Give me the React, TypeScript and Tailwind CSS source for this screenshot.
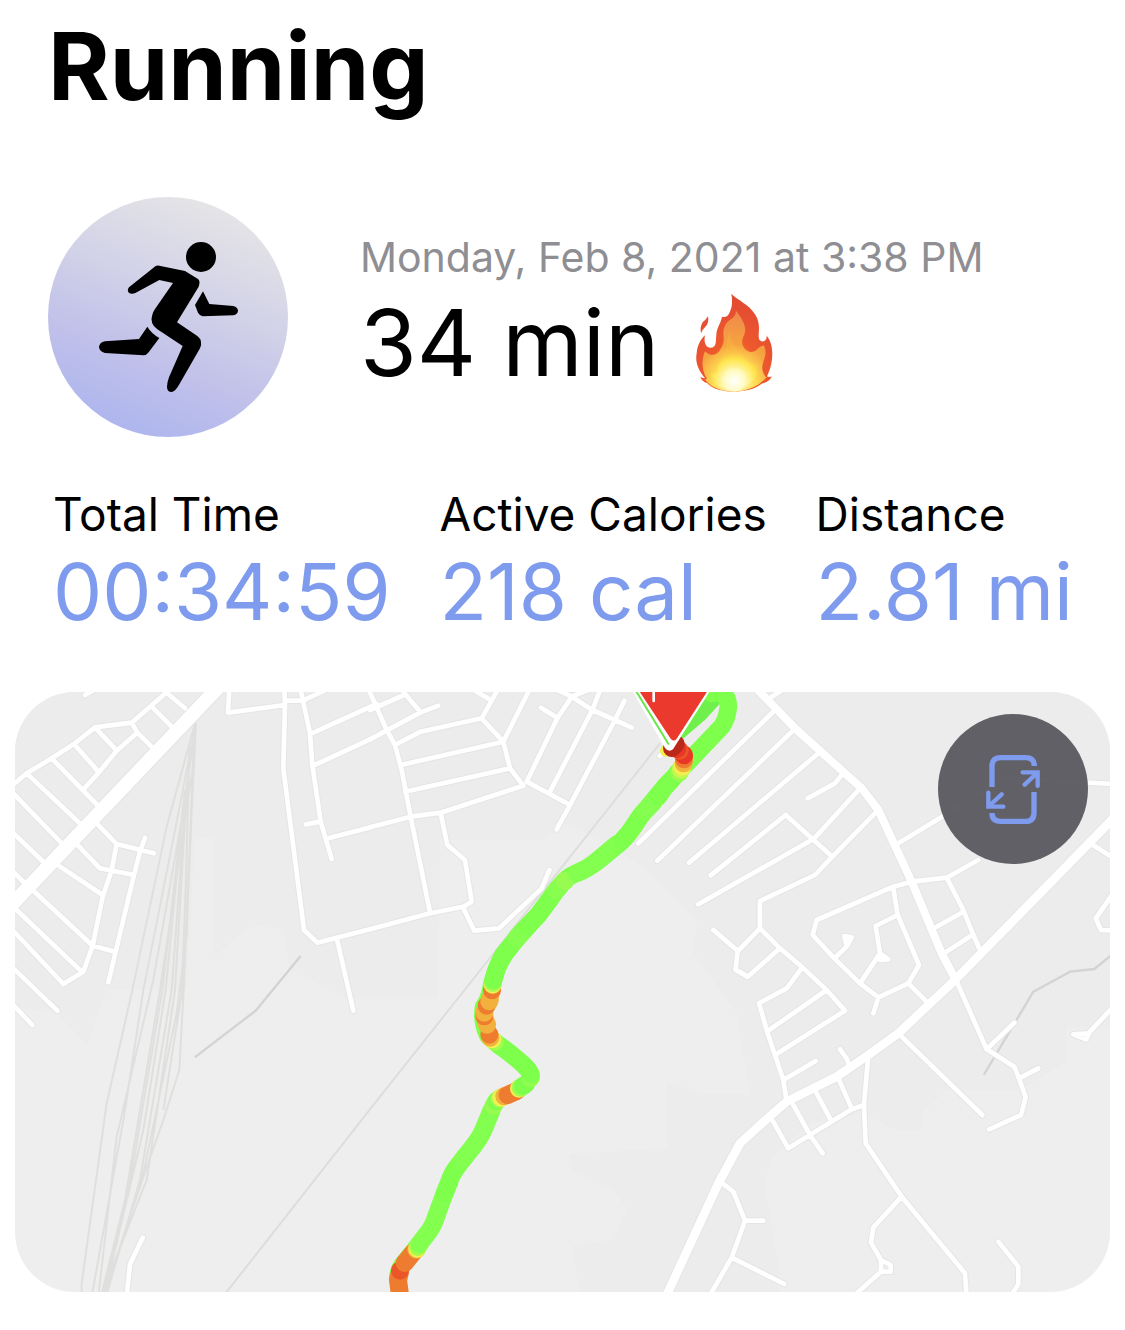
import React from "react";

type Tile = { at: string; d: string };

const minorRoads: Tile[] = [
  {
    at: "translate(0 0)",
    d: "M30 322L80 280L155 235L222 192L285 142L395 128L510 28M255 45L290 25M500 38L555 85M455 80L512 137M395 128L412 158L463 208M285 142L350 212M222 192L297 277M155 235L295 378M80 280L245 435M35 335L190 495M35 455L140 555M35 571L80 615M412 158L350 212L297 277L253 325M285 425L350 492L462 520M435 473L420 515L402 585L325 907M350 492L335 570L308 650L278 797L250 875L190 912L35 747M228 490L300 565L402 585M170 553L308 645M100 632L278 797L345 815M50 690L245 875M35 860L172 992M35 970L97 1035M688 26L684 98L855 75M853 26L855 75L850 265L912 750L952 788L1010 773L1115 746M855 62H908M901 26L930 160L937 255L962 425L995 537M918 433L962 425M985 475L1115 441M908 62L985 26M935 160L1130 72M940 257L1115 176M1010 773L1060 992M428 1673L390 1752L380 1850",
  },
  {
    at: "translate(1110 0)",
    d: "M-5 26L50 150L75 195L95 270L122 410L180 697M0 90L102 45M95 30L152 97M0 178L152 97L205 77M75 195L152 155L335 115L400 185L420 265L460 317M305 26L362 60M385 26L335 115M480 26L400 185L92 255M105 335L420 265M470 305L600 375M555 26L605 50L667 90L735 120L785 143M605 50L660 28M605 50L562 115L470 305M513 83L562 113M692 26L667 90L540 335M763 62L735 120L600 375L560 448M0 442L122 410L212 398L460 317M0 748L180 700L280 680L305 665L285 540L232 495L212 400M280 685L313 752L387 745L515 625L538 570M870 228L920 180M805 490L1215 90M862 542L1273 148M957 548L1345 220M1022 586L1247 405M985 673L1325 480M1030 750L1103 812L1097 868L1133 890",
  },
  {
    at: "translate(2235 0)",
    d: "M80 50L125 22M290 285L270 310L188 355M345 325L205 478M122 405L262 530M395 395L262 530L210 585L45 663V745L-20 812M45 745L105 805L172 862L245 930L300 992L90 1125M105 805L8 890L-28 870M172 862L125 925L42 970L68 1060L90 1125L115 1200L125 1265M245 930L70 1052M115 1200L212 1143M285 1108L305 1135L315 1165M460 490L600 405L770 295L1110 312M500 605L605 593L700 540M605 593L655 690L685 765L705 810M575 740L655 695M605 815L682 765M500 605L445 620L215 720L203 765L268 835L345 910L400 952L490 910L522 855L458 705L445 625M490 910L550 970M458 705L392 738L405 820L345 910M405 820L430 838L405 840ZM268 835L305 800L298 768L320 772L305 800M400 952L385 1000M1035 490L1110 537M1110 632L1052 715L1068 750L1110 752M632 898L725 1108M725 1108L808 1028M725 1108L808 1160L822 1195L842 1252L828 1305L732 1348M822 1195L880 1165M460 1060L712 1305M1110 975L1030 1060L985 1063L1023 1078L1032 1060M370 1125L357 1275L362 1390L470 1550L660 1780L665 1850M470 1550L385 1642L378 1688L408 1740V1775L320 1853M408 1740L437 1755V1775H408M760 1685L820 1760V1812L797 1850M75 1308L130 1405L320 1288L357 1275M145 1275L195 1365L233 1420M212 1235L260 1325M280 1195L320 1285M-75 1505L-35 1535L0 1622H55M0 1622L-40 1733L-105 1845M-40 1733L118 1812",
  },
];

const railLines =
  "M585 130L500 440L395 940L320 1270L245 1810V1850M582 160L535 400L430 930L372 1310L275 1850M588 130L545 420L460 900L350 1370L295 1850M580 250L480 930L375 1560L303 1850M555 330L487 930L400 1450L310 1850M548 400L497 930L430 1350L312 1850M555 380L515 930L420 1500L318 1850M562 300L525 930L440 1500L330 1780L315 1850M568 200L558 600L545 940L490 1290M582 180L565 600L551 930L538 1170L490 1320L430 1490L330 1790L318 1850M588 130L570 500L560 760L530 1000L430 1480L355 1720";

// Pace segments, ordered from the bottom of the map upwards so that later ones overlap earlier ones.
const green = "#7dff4c";
const lime = "#a4fb4e";
const yellow = "#f4f052";
const amber = "#f2b03d";
const orange = "#ee7c30";
const vermilion = "#ea5628";
const red = "#e93626";

const paceSegments: { c: string; d: string }[] = [
  { c: orange, d: "M92 1860L84 1800L89 1780" },
  { c: vermilion, d: "M90 1772V1771" },
  { c: orange, d: "M104 1749L130 1717" },
  { c: amber, d: "M139 1709V1708" },
  { c: yellow, d: "M142 1706V1705" },
  { c: lime, d: "M144 1701V1700" },
  { c: "#83ff4f", d: "M148 1692L168 1666Q190 1640 200 1605L222 1545" },
  { c: green, d: "M224 1540L238 1505Q245 1480 268 1452" },
  { c: "#83ff4f", d: "M275 1443C300 1410 325 1385 338 1355L365 1290" },
  { c: "#98fb4f", d: "M371 1277V1276" },
  { c: green, d: "M378 1264L382 1260" },
  { c: lime, d: "M389 1256V1255" },
  { c: yellow, d: "M394 1253V1252" },
  { c: amber, d: "M403 1249V1248" },
  { c: orange, d: "M413 1245L440 1233" },
  { c: yellow, d: "M447 1226V1225" },
  { c: lime, d: "M452 1223V1222" },
  { c: green, d: "M459 1218L468 1212" },
  { c: "#92fd4f", d: "M482 1194L483 1192" },
  { c: green, d: "M482 1182Q474 1165 450 1145Q420 1118 386 1095" },
  { c: lime, d: "M374 1085L372 1083" },
  { c: yellow, d: "M366 1078V1077" },
  { c: amber, d: "M361 1073V1072" },
  { c: orange, d: "M358 1064V1063" },
  { c: amber, d: "M351 1034L349 1028" },
  { c: orange, d: "M343 1009V1008" },
  { c: amber, d: "M343 998V997" },
  { c: orange, d: "M350 977V976" },
  { c: amber, d: "M358 964L360 956" },
  { c: orange, d: "M366 931V930" },
  { c: yellow, d: "M368 914V913" },
  { c: lime, d: "M369 909V908" },
  { c: green, d: "M370 901Q380 860 400 825L430 788" },
  { c: "#84ff4f", d: "M438 776L460 750" },
  { c: green, d: "M472 738L505 705L552 640" },
  { c: "#88fe4f", d: "M558 632L570 618" },
  { c: "#98fb4f", d: "M586 603V602" },
  { c: "#83ff4f", d: "M620 580Q650 570 690 535L740 493" },
  { c: green, d: "M758 480C790 450 795 425 820 398" },
  { c: "#84ff4f", d: "M826 392L850 367" },
  { c: green, d: "M865 350Q880 322 905 300" },
  { c: "#98fb4f", d: "M928 278V277" },
  { c: "#c4f84e", d: "M933 269V268" },
  { c: "#f4ee51", d: "M937 260V259" },
  { c: amber, d: "M941 250V249" },
  { c: orange, d: "M942 238V237" },
  { c: red, d: "M942 226L940 222" },
  { c: vermilion, d: "M929 212V211" },
  { c: red, d: "M922 207V206" },
  { c: "#b92819", d: "M917 192L906 204" },
];

function Runner() {
  return (
    <svg viewBox="24 21 720 720" className="h-full w-full" role="img" aria-label="Running workout">
      <circle cx="483" cy="201" r="45" />
      <path d="M347 228Q352 226 358 227L435 243L474 267Q482 274 476 290L411 397L472 438Q490 452 480 475L418 583Q407 604 395 606Q381 606 381 590Q382 575 387 562L428 468L352 418Q328 400 337 374Q340 364 345 357L399 279L358 270L286 309Q276 314 267 309Q260 301 267 292Z" />
      <path d="M489 304L508 342L580 348Q593 351 594 362Q593 373 580 376L488 379Q478 376 474 368L465 345Z" />
      <path d="M322 410Q334 430 358 444L326 487Q320 496 310 496L195 489Q178 485 177 471Q178 458 195 454L297 447Z" />
    </svg>
  );
}

function Flame() {
  return (
    <svg viewBox="45 20 240 305" className="h-[102px] w-20 shrink-0" role="img" aria-label="Fire">
      <defs>
        <radialGradient id="flameOuter" cx="50%" cy="80%" r="75%">
          <stop offset="0" stopColor="#ffac3c" />
          <stop offset=".42" stopColor="#ee5a2c" />
          <stop offset="1" stopColor="#e24a33" />
        </radialGradient>
        <radialGradient id="flameMid" gradientUnits="userSpaceOnUse" cx="163" cy="290" r="205">
          <stop offset="0" stopColor="#fffbd8" />
          <stop offset=".3" stopColor="#ffdf55" />
          <stop offset=".55" stopColor="#f6a440" />
          <stop offset="1" stopColor="#ef8a4b" />
        </radialGradient>
        <radialGradient id="flameCore" gradientUnits="userSpaceOnUse" cx="163" cy="287" r="88">
          <stop offset="0" stopColor="#ffffff" />
          <stop offset=".35" stopColor="#fffbc4" />
          <stop offset=".75" stopColor="#ffe94d" />
          <stop offset="1" stopColor="#fbc63f" stopOpacity=".3" />
        </radialGradient>
      </defs>
      <path d="M84 92Q88 112 76 124Q68 132 63 143Q59 123 69 109Q77 103 84 92Z" fill="#e65135" />
      <path d="M154 25C174 45 207 57 226 88C246 121 231 145 238 163Q246 173 256 164Q262 158 259 149C275 167 279 195 276 220C274 243 267 259 261 273Q270 276 276 272Q269 288 246 294C225 312 193 318 162 318C130 318 100 312 82 293Q65 289 61 274Q67 279 75 278C55 254 45 230 50 203C52 180 60 163 75 149C71 168 76 185 91 187C111 187 107 166 109 148C110 126 121 118 126 94Q143 98 150 78C158 62 157 41 154 25Z" fill="url(#flameOuter)" />
      <path d="M168 76C192 108 203 129 190 154C178 178 199 205 221 198C232 195 237 181 252 180C265 212 245 226 247 251Q251 270 260 275Q240 298 216 307Q190 318 163 318C124 318 92 305 75 283L81 280C61 249 67 216 75 197C92 214 111 211 123 188C140 160 124 149 133 125C141 101 168 101 168 76Z" fill="url(#flameMid)" />
      <path d="M153 135C144 167 164 182 181 203C195 216 202 230 218 235Q231 237 235 228C235 266 221 303 163 318C119 313 99 295 91 261Q104 271 116 254C104 240 132 221 135 200C141 175 140 152 153 135Z" fill="url(#flameCore)" opacity=".8" />
      <ellipse cx="163" cy="281" rx="38" ry="36" fill="url(#flameCore)" />
    </svg>
  );
}

function RouteMap() {
  return (
    <svg viewBox="45 36 3285 1800" className="block h-auto w-full" fill="none" role="img" aria-label="Map of the running route">
      <rect x="45" y="36" width="3285" height="1800" fill="#eeeeee" />
      <path fill="#ececec" d="M45 36H3330V1040L3200 1040V1145L3060 1230L2840 1230L2765 1300V1348H2680L2590 1300L2430 1330L2310 1440L2295 1510L2335 1760V1836H1735L1720 1696L1840 1680L1880 1585L1840 1530L1720 1475L1708 1422L2000 1405V1205L2110 1240L2250 1245L2210 1000L2080 820L2090 720L1930 560L1740 450L1690 430L1630 480H1320L1315 950H1030L870 870L850 750L790 735L740 745L643 830V475H585L560 930H320L260 1095L170 1000L45 980Z" />
      <path stroke="#dfdfdd" strokeWidth="6" strokeLinejoin="round" d={railLines} />
      <path stroke="#dddddd" strokeWidth="6" d="M1980 190L1370 960L1140 1250L675 1842" />
      <g stroke="#d1d3d4" strokeWidth="7" strokeLinejoin="round" strokeLinecap="round">
        <path d="M900 830L767 992L587 1130M3345 817L3283 867L3210 875L3100 935L2953 1182" />
      </g>
      <g strokeLinejoin="round" strokeLinecap="round">
        <g stroke="#e5e5e4" strokeWidth="20">
          {minorRoads.map((r) => (
            <path key={r.at} transform={r.at} d={r.d} />
          ))}
          <path strokeWidth="48" d="M0 711L690 -15" />
          <path strokeWidth="30" d="M2255 10L2385 145L2585 325L2635 390L2735 605L2825 820L2867 900" />
          <path strokeWidth="32" d="M3350 405L2867 898L2695 1060L2605 1125L2510 1190L2360 1265L2310 1308L2220 1390L2155 1510L2000 1845" />
        </g>
        <g stroke="#ffffff" strokeWidth="14">
          {minorRoads.map((r) => (
            <path key={r.at} transform={r.at} d={r.d} />
          ))}
          <path strokeWidth="41" d="M0 711L690 -15" />
          <path strokeWidth="24" d="M2255 10L2385 145L2585 325L2635 390L2735 605L2825 820L2867 900" />
          <path strokeWidth="26" d="M3350 405L2867 898L2695 1060L2605 1125L2510 1190L2360 1265L2310 1308L2220 1390L2155 1510L2000 1845" />
        </g>
      </g>
      <g transform="translate(1110 0)" strokeLinejoin="round" strokeLinecap="round">
        <path stroke="#6ff04a" strokeWidth="42" d="M1040 50L990 105L920 165" />
        <path stroke={green} strokeWidth="53" d="M1025 40Q1075 30 1075 80Q1072 115 1055 140L955 245L920 280" />
        <circle cx="888" cy="212" r="18" fill="#f3ef4d" />
        <path stroke={green} strokeWidth="53" d="M930 275Q895 305 870 337L820 398C795 430 790 450 752 487L690 538C650 573 622 572 593 594C562 620 545 655 505 704L430 789C395 830 375 865 369 905" />
        <path stroke={green} strokeWidth="53" d="M367 905Q358 960 341 980Q333 1020 353 1066L385 1095" />
        <path stroke={green} strokeWidth="54" d="M148 1692L104 1747Q88 1765 84 1790" />
        {paceSegments.map((s) => (
          <path key={s.d} stroke={s.c} strokeWidth="54" d={s.d} />
        ))}
        <path fill="#ffffff" d="M780 20L885 204Q896 218 909 208L1028 20Z" />
        <path stroke="#68e64a" strokeWidth="6" d="M790 20L895 191" />
        <path fill="#eb392d" d="M799 20L902 176Q911 187 920 176L1021 20Z" />
        <path stroke="#ffffff" strokeWidth="8" d="M851 20V63" />
      </g>
    </svg>
  );
}

function ExpandIcon() {
  return (
    <svg viewBox="78 45 162 207" className="h-[69px] w-[54px]" fill="none" stroke="#7e9bed" aria-hidden="true">
      <path strokeWidth="16" d="M96 141V79Q96 53 122 53H197Q223 53 223 78M222 156V218Q222 244 196 244H122Q96 244 96 219" />
      <path strokeWidth="13" strokeLinecap="round" d="M188 97H233V138M231 99L194 134M85 158V200H130M87 198L125 163" />
    </svg>
  );
}

const stats = [
  { label: "Total Time", value: "00:34:59" },
  { label: "Active Calories", value: "218 cal" },
  { label: "Distance", value: "2.81 mi" },
];

export default function App() {
  return (
    <main className="min-h-screen bg-white pb-10 font-['Inter',sans-serif] text-black">
      <h1 className="px-12 pt-1.5 text-[94px] leading-[120px] font-bold">Running</h1>

      <section className="mt-[71px] flex items-center gap-[72px] px-12">
        <div className="size-60 shrink-0 rounded-full bg-[linear-gradient(22deg,#a9b3ef_5%,#c1c1ea_35%,#d4d4e8_62%,#e7e6e6_92%)]">
          <Runner />
        </div>
        <div>
          <p className="text-[41px] leading-[52px] whitespace-nowrap text-[#8e8e93]">Monday, Feb 8, 2021 at 3:38 PM</p>
          <p className="flex items-center gap-9 text-[92px] leading-[120px] whitespace-nowrap">
            34 min
            <Flame />
          </p>
        </div>
      </section>

      <dl className="mt-[47px] flex justify-between pr-[52px] pl-[53px]">
        {stats.map((s) => (
          <div key={s.label}>
            <dt className="text-[46px] leading-[60px] whitespace-nowrap">{s.label}</dt>
            <dd className="text-[78px] leading-[96px] whitespace-nowrap text-[#7e9bed]">{s.value}</dd>
          </div>
        ))}
      </dl>

      <section className="relative mx-[15px] mt-[52px] overflow-hidden rounded-[60px]">
        <RouteMap />
        <button
          type="button"
          aria-label="Expand map"
          className="absolute top-[22px] right-[22px] flex size-[150px] items-center justify-center rounded-full bg-[#56555b]/93"
        >
          <ExpandIcon />
        </button>
      </section>
    </main>
  );
}
